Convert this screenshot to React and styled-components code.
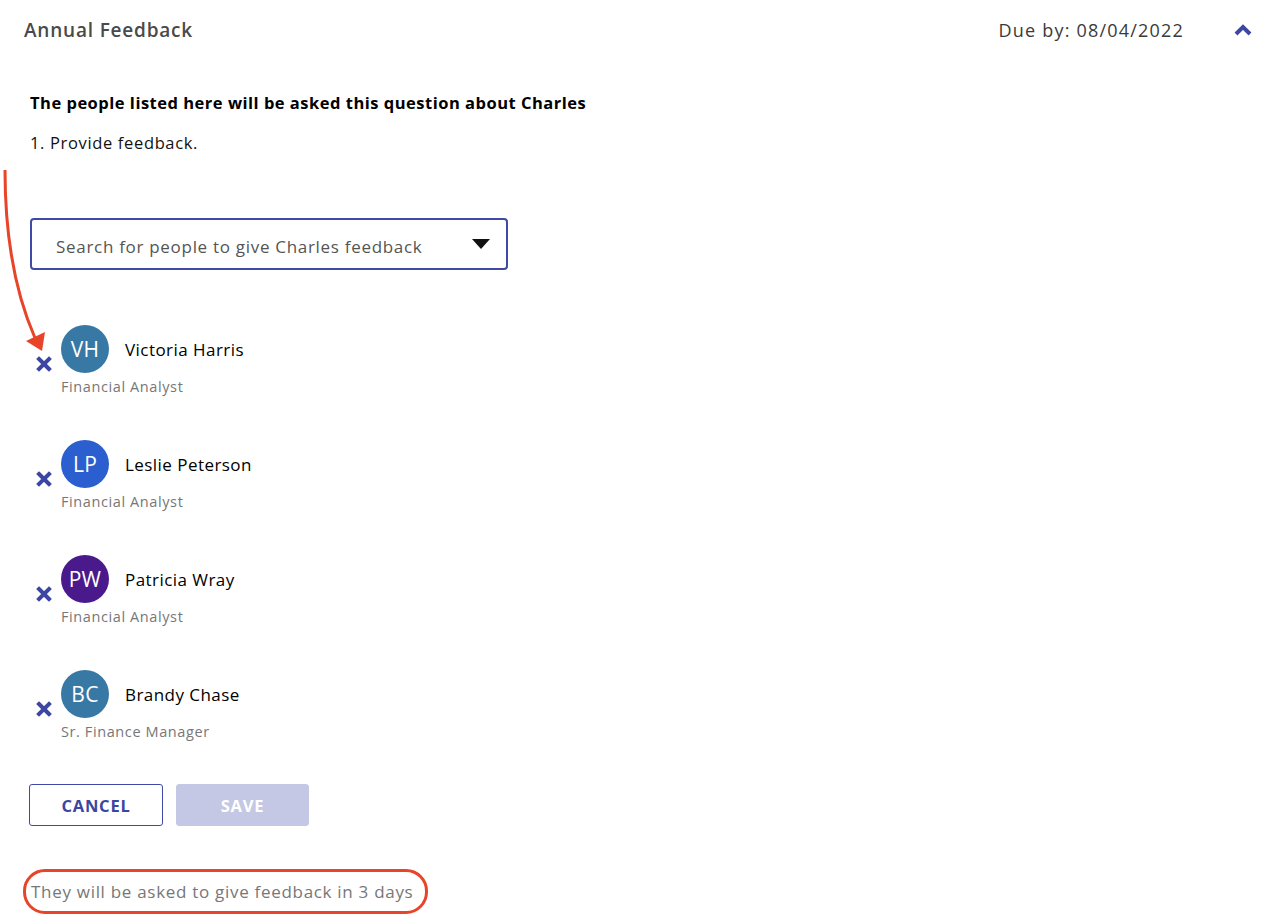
import React from 'react'
import styled, { createGlobalStyle } from 'styled-components'

const GlobalStyle = createGlobalStyle`
    body {
        margin: 0;
        background: #fff;
        font-family: "Open Sans", Lato, sans-serif;
        color: #111;
    }
`

const people = [
    { initials: 'VH', name: 'Victoria Harris', title: 'Financial Analyst', color: '#3878a4' },
    { initials: 'LP', name: 'Leslie Peterson', title: 'Financial Analyst', color: '#2b5fcf' },
    { initials: 'PW', name: 'Patricia Wray', title: 'Financial Analyst', color: '#4a1a8c' },
    { initials: 'BC', name: 'Brandy Chase', title: 'Sr. Finance Manager', color: '#3878a4' },
]

const RemoveIcon = () => (
    <svg width="16" height="16" viewBox="0 0 16 16">
        <path d="M3 3 L13 13 M13 3 L3 13" stroke="#3c47a3" strokeWidth="4" strokeLinecap="square" />
    </svg>
)

const Person = ({ person }) => (
    <Row>
        <Remove><RemoveIcon /></Remove>
        <PersonInfo>
            <Top>
                <Avatar color={person.color}>{person.initials}</Avatar>
                <Name>{person.name}</Name>
            </Top>
            <Title>{person.title}</Title>
        </PersonInfo>
    </Row>
)

const App = () => {
    return (
        <Page>
            <GlobalStyle />
            <Header>
                <Heading>Annual Feedback</Heading>
                <Right>
                    <Due>Due by: 08/04/2022</Due>
                    <svg width="18" height="12" viewBox="0 0 18 12">
                        <path d="M2 10 L9 3 L16 10" stroke="#3c47a3" strokeWidth="4" fill="none" />
                    </svg>
                </Right>
            </Header>
            <Body>
                <Lead>The people listed here will be asked this question about Charles</Lead>
                <Question>1. Provide feedback.</Question>
                <Select>
                    <Placeholder>Search for people to give Charles feedback</Placeholder>
                    <svg width="18" height="10" viewBox="0 0 18 10">
                        <path d="M0 0 H18 L9 10 Z" fill="#111" />
                    </svg>
                </Select>
                <List>
                    {people.map(p => <Person key={p.initials} person={p} />)}
                </List>
                <Buttons>
                    <Button variant="outline">CANCEL</Button>
                    <Button variant="disabled">SAVE</Button>
                </Buttons>
                <Note>They will be asked to give feedback in 3 days</Note>
            </Body>
            <Arrow width="50" height="190" viewBox="0 0 50 190">
                <path d="M5 0 C5 60 14 120 35 168" stroke="#e8442a" strokeWidth="3" fill="none" />
                <path d="M26 171 L45 162 L42 181 Z" fill="#e8442a" />
            </Arrow>
        </Page>
    )
}

export default App

const Page = styled.div`
    position: relative;
    width: 1272px;
    height: 918px;
    overflow: hidden;
`
const Header = styled.div`
    display: flex;
    justify-content: space-between;
    align-items: center;
    padding: 18px 20px 0 24px;
    height: 24px;
`
const Heading = styled.div`
    font-size: 19px;
    font-weight: 600;
    letter-spacing: 0.8px;
    color: #4a4a4a;
`
const Right = styled.div`
    display: flex;
    align-items: center;
    gap: 50px;
`
const Due = styled.div`
    font-size: 18px;
    letter-spacing: 1.2px;
    color: #3a3a3a;
`
const Body = styled.div`
    padding: 0 30px;
    margin-top: 50px;
`
const Lead = styled.div`
    font-size: 16.5px;
    letter-spacing: 0.5px;
    line-height: 22px;
    font-weight: 700;
    color: #000;
`
const Question = styled.div`
    font-size: 16.5px;
    letter-spacing: 0.65px;
    line-height: 22px;
    margin-top: 18px;
    color: #111;
`
const Select = styled.div`
    margin-top: 64px;
    height: 48px;
    border: 2px solid #3f4aa6;
    border-radius: 4px;
    display: flex;
    align-items: center;
    justify-content: space-between;
    padding: 0 16px 0 24px;
    box-sizing: content-box;
    width: 434px;
    font-size: 17px;
    letter-spacing: 0.7px;
    color: #555;
`
const Placeholder = styled.span`
    padding-top: 4px;
`
const List = styled.div`
    margin-top: 55px;
    display: flex;
    flex-direction: column;
    gap: 47px;
`
const Row = styled.div`
    display: flex;
    align-items: flex-start;
    height: 68px;
`
const Remove = styled.div`
    width: 31px;
    padding-top: 30px;
    padding-left: 6px;
    box-sizing: border-box;
`
const PersonInfo = styled.div`
    display: flex;
    flex-direction: column;
`
const Top = styled.div`
    display: flex;
    align-items: center;
    gap: 16px;
`
const Avatar = styled.div`
    width: 48px;
    height: 48px;
    border-radius: 50%;
    background: ${p => p.color};
    color: #fff;
    display: flex;
    align-items: center;
    justify-content: center;
    font-size: 21px;
    letter-spacing: 0.3px;
`
const Name = styled.div`
    font-size: 17px;
    letter-spacing: 0.45px;
    color: #000;
`
const Title = styled.div`
    margin-top: 4px;
    font-size: 14.5px;
    letter-spacing: 0.6px;
    line-height: 20px;
    color: #777;
`
const Buttons = styled.div`
    display: flex;
    gap: 13px;
    margin: 46px 0 0 -1px;
`
const Button = styled.div`
    width: 134px;
    height: 42px;
    box-sizing: border-box;
    border-radius: 3px;
    display: flex;
    align-items: center;
    justify-content: center;
    font-size: 16.5px;
    letter-spacing: 0.8px;
    font-weight: 700;
    border: 1px solid ${p => p.variant === 'outline' ? '#3f4aa6' : '#c4c8e4'};
    background: ${p => p.variant === 'outline' ? '#fff' : '#c4c8e4'};
    color: ${p => p.variant === 'outline' ? '#3a46a0' : '#fff'};
    &:last-child { width: 133px; }
`
const Note = styled.div`
    display: inline-block;
    margin: 43px 0 0 -7px;
    padding: 8px 12px 8px 5px;
    border: 3px solid #e8442a;
    border-radius: 22px;
    font-size: 17px;
    letter-spacing: 0.7px;
    color: #777;
`
const Arrow = styled.svg`
    position: absolute;
    left: 0;
    top: 170px;
`
